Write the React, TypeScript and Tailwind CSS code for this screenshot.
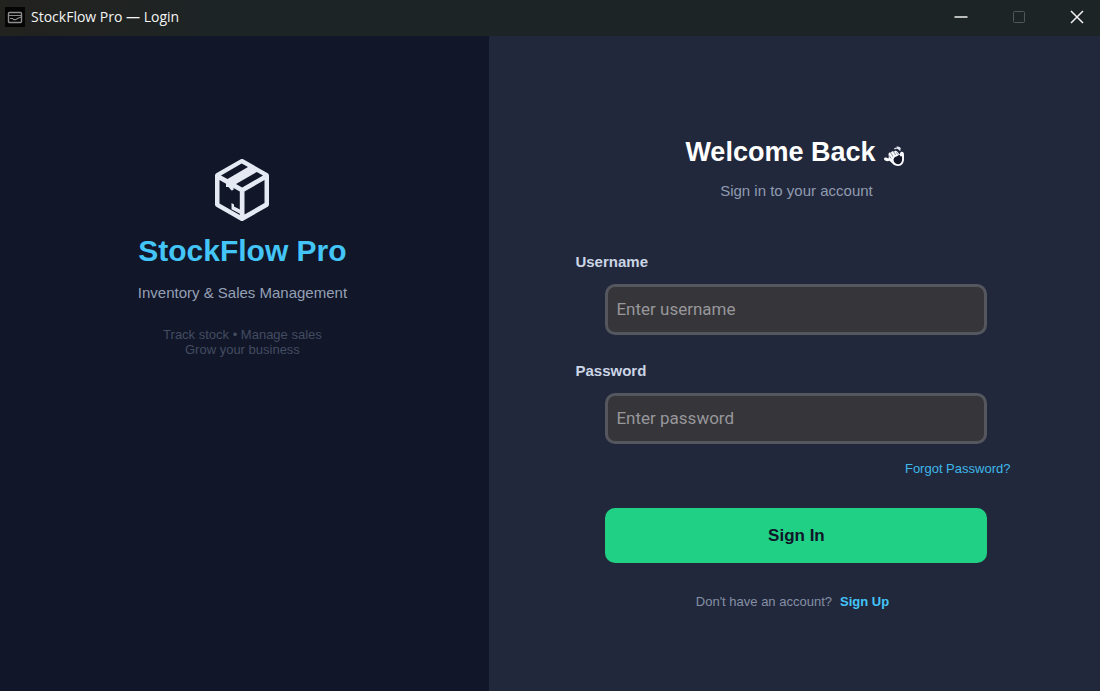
import type { ReactNode } from "react";

function AppIcon() {
  return (
    <svg viewBox="0 0 20 20" className="size-5 shrink-0" fill="none" aria-hidden="true">
      <rect width="20" height="20" fill="#050505" />
      <rect x="3.5" y="5.5" width="13" height="10" rx="1" stroke="#8f8f8f" strokeWidth="1.4" />
      <path d="M4 8.5h12M5 11.500h2.500l1.500 1.200h1.500l2-1.200 3.500-1.500" stroke="#8c8c8c" strokeWidth="1.200" />
    </svg>
  );
}

function BoxLogo() {
  return (
    <svg viewBox="0 0 54 62" className="h-[62px] w-[54px]" fill="none" aria-hidden="true">
      <path
        d="M27 2.500 51.500 16.500V45.500L27 59.500 2.500 45.500V16.500Z"
        fill="#e4e9f3"
        stroke="#e4e9f3"
        strokeWidth="5"
        strokeLinejoin="round"
      />
      <path
        d="M6 16.500 26.700 4.500 33 8 12.500 20Z M21 25 41.800 13 48 16.500 27.200 28.500Z M29.500 32.500 49.500 21V44L29.500 55.500Z M4.500 21 11 24.800V28L13.500 28 16.500 31.500 18.500 31V29L24.800 32.500V56L4.500 44.500Z"
        fill="#111629"
      />
      <path d="M16.500 44 19 45.500V47.500L25 50.500V54.800L16.500 50.300Z" fill="#e4e9f3" />
    </svg>
  );
}

function WavingHand() {
  return (
    <svg viewBox="0 0 22 22" className="size-[22px]" fill="none" aria-hidden="true">
      <path
        d="M1 13.800c.2-1.500 1.800-1.600 2.800-1l1.600.7.4-1.500-.3-3c0-1.500 1.500-2 2.500-1.200.2-1.700 2-2.200 3-1 .5-1.400 2.300-1.600 3.200-.3l2.500 3 .5-1.500c.5-1.500 2.600-1.600 3.400-.2.5 1 .4 3 .4 5 .2 4.500-1.500 8.200-5.600 8.200-3 0-4.700-.7-6.200-2.700L6.500 15.700c-1.500.7-2.700.6-4 0C1.500 15.200.9 14.600 1 13.800Z"
        fill="#fbfcff"
      />
      <path
        d="m10.500 14.800c.2-2 1.500-3 3-3.300l2.800-1.800 1.500 1.700 1-.4c.8 3.500.3 8-3.600 8.200-3 .1-4.500-2-4.700-4.400Z"
        fill="#141727"
      />
      <path d="M8 8.200 10 11.700M10.800 7 12.600 10M13.500 7.400l1.600 2.200M6 10.500l2.200 3" stroke="#68718a" strokeWidth=".8" />
      <path d="M11.300 4c2.400-1.800 5-.6 5.800 1.600M13.600 2.200c2-.3 3.400.6 4 2" stroke="#dfe3ed" strokeWidth="1.300" />
    </svg>
  );
}

function WindowButton({ label, disabled, children }: { label: string; disabled?: boolean; children: ReactNode }) {
  return (
    <button
      type="button"
      aria-label={label}
      disabled={disabled}
      className="flex h-full w-[58px] items-center justify-center text-[#f1f1f1] disabled:text-[#50565a]"
    >
      <svg viewBox="0 0 14 14" className="size-3.5" fill="none" stroke="currentColor" aria-hidden="true">
        {children}
      </svg>
    </button>
  );
}

function TitleBar() {
  return (
    <header className="flex h-9 shrink-0 items-center justify-between bg-linear-to-r from-[#22221e] to-[#1d2425] to-20% pl-[5px]">
      <div className="flex items-center gap-1.5 pb-0.5">
        <AppIcon />
        <span className="font-['Open_Sans','Noto_Sans',sans-serif] text-[14px] leading-5 text-[#f4f4f4]">
          StockFlow Pro — Login
        </span>
      </div>
      <div className="-mr-1.5 flex h-full pb-0.5">
        <WindowButton label="Minimize">
          <path d="M.5 7h13" strokeWidth="1.500" />
        </WindowButton>
        <WindowButton label="Maximize" disabled>
          <rect x="1.500" y="1.500" width="11" height="11" rx="1" />
        </WindowButton>
        <WindowButton label="Close">
          <path d="m1 1 12 12M13 1 1 13" strokeWidth="1.500" />
        </WindowButton>
      </div>
    </header>
  );
}

function Field({ id, label, type, placeholder }: { id: string; label: string; type: string; placeholder: string }) {
  return (
    <div>
      <label htmlFor={id} className="block text-[15px] leading-5 font-bold text-[#cbd5e6]">
        {label}
      </label>
      <div className="mt-3 px-[30px]">
        <input
          id={id}
          type={type}
          placeholder={placeholder}
          className="h-[51px] w-full rounded-[10px] border-3 border-[#55575e] bg-[#363539] px-2 pb-0.5 font-[Roboto,sans-serif] text-[17px] text-[#dce4ee] outline-none placeholder:text-[#97979b] focus:border-[#3fc1f5]"
        />
      </div>
    </div>
  );
}

export default function App() {
  return (
    <div className="flex min-h-screen flex-col bg-[#22283b] font-['Liberation_Sans',Arial,sans-serif]">
      <TitleBar />
      <main className="grid grow grid-cols-[4fr_5fr]">
        <section className="flex flex-col items-center bg-[#111629] pt-[123px] pr-1 text-center">
          <BoxLogo />
          <h1 className="mt-3 text-[30px] leading-9 font-bold text-[#43c5f8]">StockFlow Pro</h1>
          <p className="mt-3.5 text-[15px] leading-5 text-[#95a0b5]">Inventory &amp; Sales Management</p>
          <p className="mt-6 text-[13px] leading-[15px] text-[#434c60]">
            Track stock • Manage sales
            <br />
            Grow your business
          </p>
        </section>

        <section className="flex flex-col items-center pt-[98px] pb-6 pl-1">
          <div className="flex items-center gap-2 pr-0.5">
            <h2 className="text-[27px] leading-9 font-bold text-white">Welcome Back</h2>
            <span className="pt-2">
              <WavingHand />
            </span>
          </div>
          <p className="mt-[11px] text-[15px] leading-5 text-[#8f9bb1]">Sign in to your account</p>

          <form className="mt-[51px] w-full max-w-[442px]" onSubmit={(e) => e.preventDefault()}>
            <div className="flex flex-col gap-[26px]">
              <Field id="username" label="Username" type="text" placeholder="Enter username" />
              <Field id="password" label="Password" type="password" placeholder="Enter password" />
            </div>
            <div className="mt-[15px] flex justify-end pr-[7px]">
              <a href="#forgot" className="text-[13px] leading-5 text-[#3db8ea]">
                Forgot Password?
              </a>
            </div>
            <div className="mt-[29px] px-[30px]">
              <button
                type="submit"
                className="h-[55px] w-full rounded-[10px] bg-[#20d085] text-[17px] font-bold text-[#101528]"
              >
                Sign In
              </button>
            </div>
          </form>

          <p className="mt-[29px] flex gap-2 pr-2 text-[13px] leading-5 text-[#8490a6]">
            Don't have an account?
            <a href="#signup" className="font-bold text-[#43c5f8]">
              Sign Up
            </a>
          </p>
        </section>
      </main>
    </div>
  );
}
